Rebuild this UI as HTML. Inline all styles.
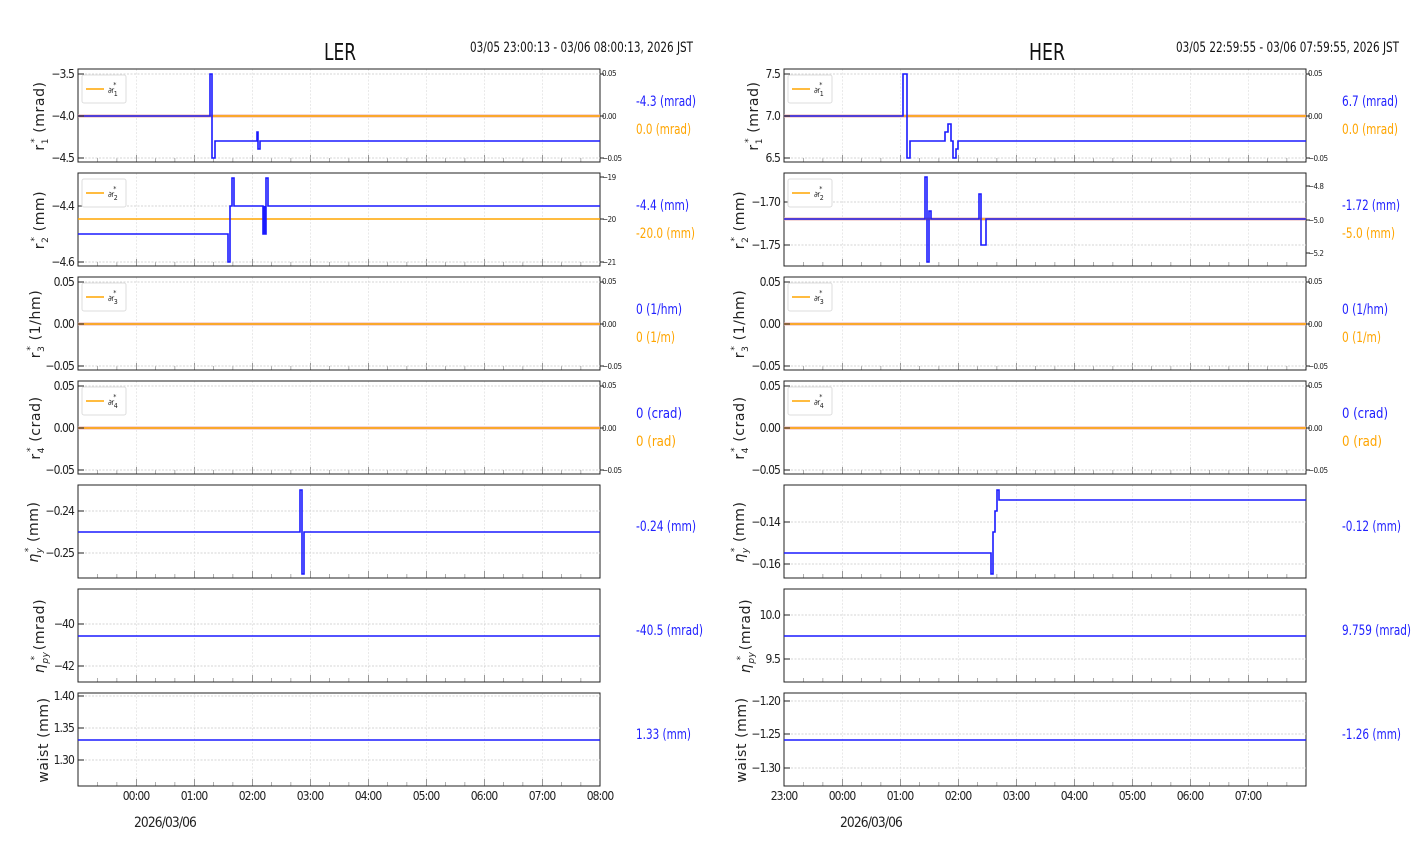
<!DOCTYPE html>
<html><head><meta charset="utf-8"><style>
html,body{margin:0;padding:0;background:#fff;width:1412px;height:864px;overflow:hidden}
svg{display:block}
.t{font-family:"Liberation Sans Narrow","DejaVu Sans Condensed","Liberation Sans",sans-serif;font-size:12px;letter-spacing:-0.9px;fill:#222}
.s{font-family:"Liberation Sans Narrow","DejaVu Sans Condensed",sans-serif;font-size:8px;letter-spacing:-0.5px;fill:#222}
.yl{font-family:"DejaVu Sans","Liberation Sans",sans-serif;font-size:14px;letter-spacing:0.6px;fill:#222}
.an{font-family:"Liberation Sans Narrow","DejaVu Sans Condensed",sans-serif;font-size:14px}
.b{fill:none;stroke:#1a1aff;stroke-width:1.6}
.o{stroke:#ffa500;stroke-width:1.5}
.g{stroke:#c8c8c8;stroke-width:0.8;stroke-dasharray:2,1.5}
</style></head><body>
<svg width="1412" height="864" viewBox="0 0 1412 864" xmlns="http://www.w3.org/2000/svg">
<defs>
<pattern id="vg" patternUnits="userSpaceOnUse" x="0" y="0" width="58" height="93">
<line x1="0" y1="0" x2="0" y2="93" stroke="#c8c8c8" stroke-width="0.8" stroke-dasharray="2,1.5"/>
<line x1="0" y1="86" x2="0" y2="93" stroke="#333" stroke-width="1"/>
</pattern>
<pattern id="mt" patternUnits="userSpaceOnUse" x="0" y="0" width="19.333" height="93">
<line x1="0" y1="89" x2="0" y2="93" stroke="#333" stroke-width="0.8"/>
</pattern>
<g id="frame">
<rect x="0" y="0" width="522" height="93" fill="url(#mt)"/>
<rect x="0" y="0" width="522" height="93" fill="url(#vg)"/>
<rect x="0" y="0" width="522" height="93" fill="none" stroke="#222" stroke-width="1"/>
</g>
</defs>

<text x="340" y="60" text-anchor="middle" font-family="Liberation Sans Narrow,DejaVu Sans Condensed,sans-serif" font-size="23" textLength="32" lengthAdjust="spacingAndGlyphs" fill="#111">LER</text>
<text x="470" y="52" font-family="Liberation Sans Narrow,DejaVu Sans Condensed,sans-serif" font-size="14" textLength="223" lengthAdjust="spacingAndGlyphs" fill="#111">03/05 23:00:13 - 03/06 08:00:13, 2026 JST</text>
<text x="1047" y="60" text-anchor="middle" font-family="Liberation Sans Narrow,DejaVu Sans Condensed,sans-serif" font-size="23" textLength="36" lengthAdjust="spacingAndGlyphs" fill="#111">HER</text>
<text x="1176" y="52" font-family="Liberation Sans Narrow,DejaVu Sans Condensed,sans-serif" font-size="14" textLength="223" lengthAdjust="spacingAndGlyphs" fill="#111">03/05 22:59:55 - 03/06 07:59:55, 2026 JST</text>

<!-- ============ LEFT ============ -->
<g transform="translate(78,69)">
<use href="#frame"/>
<line class="g" x1="0" x2="522" y1="5" y2="5"/><line class="g" x1="0" x2="522" y1="47" y2="47"/><line class="g" x1="0" x2="522" y1="89" y2="89"/>
<line x1="0" x2="522" y1="47" y2="47" stroke="#e8b0b0" stroke-width="3"/>
<line class="o" x1="0" x2="522" y1="47" y2="47"/>
<path class="b" d="M0,47 H132 V5 H134 V89 H137 V72 H179 V63 H180 V80 H182 V72 H522"/>
<g stroke="#222"><line x1="0" x2="6" y1="5" y2="5"/><line x1="0" x2="6" y1="47" y2="47"/><line x1="0" x2="6" y1="89" y2="89"/><line x1="522" x2="526" y1="5" y2="5"/><line x1="522" x2="526" y1="47" y2="47"/><line x1="522" x2="526" y1="89" y2="89"/></g>
<text class="t" x="-4" y="9" text-anchor="end">−3.5</text><text class="t" x="-4" y="51" text-anchor="end">−4.0</text><text class="t" x="-4" y="93" text-anchor="end">−4.5</text>
<text class="s" x="524" y="7">0.05</text><text class="s" x="524" y="50">0.00</text><text class="s" x="524" y="92">−0.05</text>
<rect x="4" y="6" width="44" height="28" rx="2" fill="#fff" stroke="#ddd"/><line class="o" x1="8" x2="26" y1="20" y2="20"/>
<text class="s" x="30" y="24" font-size="10">∂r<tspan font-size="7" dy="3">1</tspan><tspan font-size="7" dx="-4" dy="-9">*</tspan></text>
</g>
<g transform="translate(78,173)">
<use href="#frame"/>
<line class="g" x1="0" x2="522" y1="33" y2="33"/><line class="g" x1="0" x2="522" y1="89" y2="89"/>
<line class="o" x1="0" x2="522" y1="46" y2="46"/>
<path class="b" d="M0,61 H150 V89 H152 V33 H154 V5 H156 V33 H185 V61 H188 V5 H190 V33 H522"/>
<rect x="185" y="33" width="3" height="28" fill="#1a1aff"/>
<g stroke="#222"><line x1="0" x2="6" y1="33" y2="33"/><line x1="0" x2="6" y1="89" y2="89"/><line x1="522" x2="526" y1="4" y2="4"/><line x1="522" x2="526" y1="46" y2="46"/><line x1="522" x2="526" y1="89" y2="89"/></g>
<text class="t" x="-4" y="37" text-anchor="end">−4.4</text><text class="t" x="-4" y="93" text-anchor="end">−4.6</text>
<text class="s" x="524" y="7">−19</text><text class="s" x="524" y="49">−20</text><text class="s" x="524" y="92">−21</text>
<rect x="4" y="6" width="44" height="28" rx="2" fill="#fff" stroke="#ddd"/><line class="o" x1="8" x2="26" y1="20" y2="20"/>
<text class="s" x="30" y="24" font-size="10">∂r<tspan font-size="7" dy="3">2</tspan><tspan font-size="7" dx="-4" dy="-9">*</tspan></text>
</g>
<g transform="translate(78,277)">
<use href="#frame"/>
<line class="g" x1="0" x2="522" y1="5" y2="5"/><line class="g" x1="0" x2="522" y1="89" y2="89"/>
<line x1="0" x2="522" y1="47" y2="47" stroke="#e8b0b0" stroke-width="3"/><line class="o" x1="0" x2="522" y1="47" y2="47"/>
<g stroke="#222"><line x1="0" x2="6" y1="5" y2="5"/><line x1="0" x2="6" y1="47" y2="47"/><line x1="0" x2="6" y1="89" y2="89"/><line x1="522" x2="526" y1="5" y2="5"/><line x1="522" x2="526" y1="47" y2="47"/><line x1="522" x2="526" y1="89" y2="89"/></g>
<text class="t" x="-4" y="9" text-anchor="end">0.05</text><text class="t" x="-4" y="51" text-anchor="end">0.00</text><text class="t" x="-4" y="93" text-anchor="end">−0.05</text>
<text class="s" x="524" y="7">0.05</text><text class="s" x="524" y="50">0.00</text><text class="s" x="524" y="92">−0.05</text>
<rect x="4" y="6" width="44" height="28" rx="2" fill="#fff" stroke="#ddd"/><line class="o" x1="8" x2="26" y1="20" y2="20"/>
<text class="s" x="30" y="24" font-size="10">∂r<tspan font-size="7" dy="3">3</tspan><tspan font-size="7" dx="-4" dy="-9">*</tspan></text>
</g>
<g transform="translate(78,381)">
<use href="#frame"/>
<line class="g" x1="0" x2="522" y1="5" y2="5"/><line class="g" x1="0" x2="522" y1="89" y2="89"/>
<line x1="0" x2="522" y1="47" y2="47" stroke="#e8b0b0" stroke-width="3"/><line class="o" x1="0" x2="522" y1="47" y2="47"/>
<g stroke="#222"><line x1="0" x2="6" y1="5" y2="5"/><line x1="0" x2="6" y1="47" y2="47"/><line x1="0" x2="6" y1="89" y2="89"/><line x1="522" x2="526" y1="5" y2="5"/><line x1="522" x2="526" y1="47" y2="47"/><line x1="522" x2="526" y1="89" y2="89"/></g>
<text class="t" x="-4" y="9" text-anchor="end">0.05</text><text class="t" x="-4" y="51" text-anchor="end">0.00</text><text class="t" x="-4" y="93" text-anchor="end">−0.05</text>
<text class="s" x="524" y="7">0.05</text><text class="s" x="524" y="50">0.00</text><text class="s" x="524" y="92">−0.05</text>
<rect x="4" y="6" width="44" height="28" rx="2" fill="#fff" stroke="#ddd"/><line class="o" x1="8" x2="26" y1="20" y2="20"/>
<text class="s" x="30" y="24" font-size="10">∂r<tspan font-size="7" dy="3">4</tspan><tspan font-size="7" dx="-4" dy="-9">*</tspan></text>
</g>
<g transform="translate(78,485)">
<use href="#frame"/>
<line class="g" x1="0" x2="522" y1="26" y2="26"/><line class="g" x1="0" x2="522" y1="68" y2="68"/>
<path class="b" d="M0,47 H222 V5 H224 V89 H226 V47 H522"/>
<g stroke="#222"><line x1="0" x2="6" y1="26" y2="26"/><line x1="0" x2="6" y1="68" y2="68"/></g>
<text class="t" x="-4" y="30" text-anchor="end">−0.24</text><text class="t" x="-4" y="72" text-anchor="end">−0.25</text>
</g>
<g transform="translate(78,589)">
<use href="#frame"/>
<line class="g" x1="0" x2="522" y1="35" y2="35"/><line class="g" x1="0" x2="522" y1="77" y2="77"/>
<path class="b" d="M0,47 H522"/>
<g stroke="#222"><line x1="0" x2="6" y1="35" y2="35"/><line x1="0" x2="6" y1="77" y2="77"/></g>
<text class="t" x="-4" y="39" text-anchor="end">−40</text><text class="t" x="-4" y="81" text-anchor="end">−42</text>
</g>
<g transform="translate(78,693)">
<use href="#frame"/>
<line class="g" x1="0" x2="522" y1="3" y2="3"/><line class="g" x1="0" x2="522" y1="35" y2="35"/><line class="g" x1="0" x2="522" y1="67" y2="67"/>
<path class="b" d="M0,47 H522"/>
<g stroke="#222"><line x1="0" x2="6" y1="3" y2="3"/><line x1="0" x2="6" y1="35" y2="35"/><line x1="0" x2="6" y1="67" y2="67"/></g>
<text class="t" x="-4" y="7" text-anchor="end">1.40</text><text class="t" x="-4" y="39" text-anchor="end">1.35</text><text class="t" x="-4" y="71" text-anchor="end">1.30</text>
</g>
<g class="t" text-anchor="middle">
<text x="136" y="800">00:00</text><text x="194" y="800">01:00</text><text x="252" y="800">02:00</text><text x="310" y="800">03:00</text><text x="368" y="800">04:00</text><text x="426" y="800">05:00</text><text x="484" y="800">06:00</text><text x="542" y="800">07:00</text><text x="600" y="800">08:00</text>
<text x="165" y="827" font-size="14" textLength="62" lengthAdjust="spacingAndGlyphs">2026/03/06</text>
</g>
<g class="yl" text-anchor="middle">
<text transform="translate(44,116) rotate(-90)">r<tspan font-size="9" dy="4">1</tspan><tspan font-size="9" dx="-5" dy="-11">*</tspan><tspan dy="7"> (mrad)</tspan></text>
<text transform="translate(44,220) rotate(-90)">r<tspan font-size="9" dy="4">2</tspan><tspan font-size="9" dx="-5" dy="-11">*</tspan><tspan dy="7"> (mm)</tspan></text>
<text transform="translate(40,324) rotate(-90)">r<tspan font-size="9" dy="4">3</tspan><tspan font-size="9" dx="-5" dy="-11">*</tspan><tspan dy="7"> (1/hm)</tspan></text>
<text transform="translate(40,428) rotate(-90)">r<tspan font-size="9" dy="4">4</tspan><tspan font-size="9" dx="-5" dy="-11">*</tspan><tspan dy="7"> (crad)</tspan></text>
<text transform="translate(38,532) rotate(-90)"><tspan font-style="italic">η</tspan><tspan font-size="9" dy="4" font-style="italic">y</tspan><tspan font-size="9" dx="-5" dy="-11">*</tspan><tspan dy="7"> (mm)</tspan></text>
<text transform="translate(44,636) rotate(-90)"><tspan font-style="italic">η</tspan><tspan font-size="9" dy="4" font-style="italic">py</tspan><tspan font-size="9" dx="-9" dy="-11">*</tspan><tspan dy="7"> (mrad)</tspan></text>
<text transform="translate(48,740) rotate(-90)">waist (mm)</text>
</g>
<g class="an" lengthAdjust="spacingAndGlyphs">
<text x="636" y="106" fill="#2020ff" textLength="60" lengthAdjust="spacingAndGlyphs">-4.3 (mrad)</text><text x="636" y="134" fill="#ffa500" textLength="55" lengthAdjust="spacingAndGlyphs">0.0 (mrad)</text>
<text x="636" y="210" fill="#2020ff" textLength="53" lengthAdjust="spacingAndGlyphs">-4.4 (mm)</text><text x="636" y="238" fill="#ffa500" textLength="59" lengthAdjust="spacingAndGlyphs">-20.0 (mm)</text>
<text x="636" y="314" fill="#2020ff" textLength="46" lengthAdjust="spacingAndGlyphs">0 (1/hm)</text><text x="636" y="342" fill="#ffa500" textLength="39" lengthAdjust="spacingAndGlyphs">0 (1/m)</text>
<text x="636" y="418" fill="#2020ff" textLength="46" lengthAdjust="spacingAndGlyphs">0 (crad)</text><text x="636" y="446" fill="#ffa500" textLength="40" lengthAdjust="spacingAndGlyphs">0 (rad)</text>
<text x="636" y="531" fill="#2020ff" textLength="60" lengthAdjust="spacingAndGlyphs">-0.24 (mm)</text>
<text x="636" y="635" fill="#2020ff" textLength="67" lengthAdjust="spacingAndGlyphs">-40.5 (mrad)</text>
<text x="636" y="739" fill="#2020ff" textLength="55" lengthAdjust="spacingAndGlyphs">1.33 (mm)</text>
</g>

<!-- ============ RIGHT ============ -->
<g transform="translate(784,69)">
<use href="#frame"/>
<line class="g" x1="0" x2="522" y1="5" y2="5"/><line class="g" x1="0" x2="522" y1="47" y2="47"/><line class="g" x1="0" x2="522" y1="89" y2="89"/>
<line x1="0" x2="522" y1="47" y2="47" stroke="#e8b0b0" stroke-width="3"/><line class="o" x1="0" x2="522" y1="47" y2="47"/>
<path class="b" d="M0,47 H119 V5 H123 V89 H126 V72 H161 V63 H164 V55 H167 V72 H169 V89 H172 V80 H174 V72 H522"/>
<g stroke="#222"><line x1="0" x2="6" y1="5" y2="5"/><line x1="0" x2="6" y1="47" y2="47"/><line x1="0" x2="6" y1="89" y2="89"/><line x1="522" x2="526" y1="5" y2="5"/><line x1="522" x2="526" y1="47" y2="47"/><line x1="522" x2="526" y1="89" y2="89"/></g>
<text class="t" x="-4" y="9" text-anchor="end">7.5</text><text class="t" x="-4" y="51" text-anchor="end">7.0</text><text class="t" x="-4" y="93" text-anchor="end">6.5</text>
<text class="s" x="524" y="7">0.05</text><text class="s" x="524" y="50">0.00</text><text class="s" x="524" y="92">−0.05</text>
<rect x="4" y="6" width="44" height="28" rx="2" fill="#fff" stroke="#ddd"/><line class="o" x1="8" x2="26" y1="20" y2="20"/>
<text class="s" x="30" y="24" font-size="10">∂r<tspan font-size="7" dy="3">1</tspan><tspan font-size="7" dx="-4" dy="-9">*</tspan></text>
</g>
<g transform="translate(784,173)">
<use href="#frame"/>
<line class="g" x1="0" x2="522" y1="29" y2="29"/><line class="g" x1="0" x2="522" y1="72" y2="72"/>
<line x1="0" x2="522" y1="46" y2="46" stroke="#e8b0b0" stroke-width="3"/><line class="o" x1="0" x2="522" y1="46" y2="46"/>
<path class="b" d="M0,46 H141 V4 H143 V89 H145 V38 H147 V46 H195 V21 H197 V72 H202 V46 H522"/>
<g stroke="#222"><line x1="0" x2="6" y1="29" y2="29"/><line x1="0" x2="6" y1="72" y2="72"/><line x1="522" x2="526" y1="13" y2="13"/><line x1="522" x2="526" y1="47" y2="47"/><line x1="522" x2="526" y1="80" y2="80"/></g>
<text class="t" x="-4" y="33" text-anchor="end">−1.70</text><text class="t" x="-4" y="76" text-anchor="end">−1.75</text>
<text class="s" x="524" y="16">−4.8</text><text class="s" x="524" y="50">−5.0</text><text class="s" x="524" y="83">−5.2</text>
<rect x="4" y="6" width="44" height="28" rx="2" fill="#fff" stroke="#ddd"/><line class="o" x1="8" x2="26" y1="20" y2="20"/>
<text class="s" x="30" y="24" font-size="10">∂r<tspan font-size="7" dy="3">2</tspan><tspan font-size="7" dx="-4" dy="-9">*</tspan></text>
</g>
<g transform="translate(784,277)">
<use href="#frame"/>
<line class="g" x1="0" x2="522" y1="5" y2="5"/><line class="g" x1="0" x2="522" y1="89" y2="89"/>
<line x1="0" x2="522" y1="47" y2="47" stroke="#e8b0b0" stroke-width="3"/><line class="o" x1="0" x2="522" y1="47" y2="47"/>
<g stroke="#222"><line x1="0" x2="6" y1="5" y2="5"/><line x1="0" x2="6" y1="47" y2="47"/><line x1="0" x2="6" y1="89" y2="89"/><line x1="522" x2="526" y1="5" y2="5"/><line x1="522" x2="526" y1="47" y2="47"/><line x1="522" x2="526" y1="89" y2="89"/></g>
<text class="t" x="-4" y="9" text-anchor="end">0.05</text><text class="t" x="-4" y="51" text-anchor="end">0.00</text><text class="t" x="-4" y="93" text-anchor="end">−0.05</text>
<text class="s" x="524" y="7">0.05</text><text class="s" x="524" y="50">0.00</text><text class="s" x="524" y="92">−0.05</text>
<rect x="4" y="6" width="44" height="28" rx="2" fill="#fff" stroke="#ddd"/><line class="o" x1="8" x2="26" y1="20" y2="20"/>
<text class="s" x="30" y="24" font-size="10">∂r<tspan font-size="7" dy="3">3</tspan><tspan font-size="7" dx="-4" dy="-9">*</tspan></text>
</g>
<g transform="translate(784,381)">
<use href="#frame"/>
<line class="g" x1="0" x2="522" y1="5" y2="5"/><line class="g" x1="0" x2="522" y1="89" y2="89"/>
<line x1="0" x2="522" y1="47" y2="47" stroke="#e8b0b0" stroke-width="3"/><line class="o" x1="0" x2="522" y1="47" y2="47"/>
<g stroke="#222"><line x1="0" x2="6" y1="5" y2="5"/><line x1="0" x2="6" y1="47" y2="47"/><line x1="0" x2="6" y1="89" y2="89"/><line x1="522" x2="526" y1="5" y2="5"/><line x1="522" x2="526" y1="47" y2="47"/><line x1="522" x2="526" y1="89" y2="89"/></g>
<text class="t" x="-4" y="9" text-anchor="end">0.05</text><text class="t" x="-4" y="51" text-anchor="end">0.00</text><text class="t" x="-4" y="93" text-anchor="end">−0.05</text>
<text class="s" x="524" y="7">0.05</text><text class="s" x="524" y="50">0.00</text><text class="s" x="524" y="92">−0.05</text>
<rect x="4" y="6" width="44" height="28" rx="2" fill="#fff" stroke="#ddd"/><line class="o" x1="8" x2="26" y1="20" y2="20"/>
<text class="s" x="30" y="24" font-size="10">∂r<tspan font-size="7" dy="3">4</tspan><tspan font-size="7" dx="-4" dy="-9">*</tspan></text>
</g>
<g transform="translate(784,485)">
<use href="#frame"/>
<line class="g" x1="0" x2="522" y1="37" y2="37"/><line class="g" x1="0" x2="522" y1="79" y2="79"/>
<path class="b" d="M0,68 H207 V89 H209 V47 H211 V26 H213 V5 H215 V15 H522"/>
<g stroke="#222"><line x1="0" x2="6" y1="37" y2="37"/><line x1="0" x2="6" y1="79" y2="79"/></g>
<text class="t" x="-4" y="41" text-anchor="end">−0.14</text><text class="t" x="-4" y="83" text-anchor="end">−0.16</text>
</g>
<g transform="translate(784,589)">
<use href="#frame"/>
<line class="g" x1="0" x2="522" y1="26" y2="26"/><line class="g" x1="0" x2="522" y1="70" y2="70"/>
<path class="b" d="M0,47 H522"/>
<g stroke="#222"><line x1="0" x2="6" y1="26" y2="26"/><line x1="0" x2="6" y1="70" y2="70"/></g>
<text class="t" x="-4" y="30" text-anchor="end">10.0</text><text class="t" x="-4" y="74" text-anchor="end">9.5</text>
</g>
<g transform="translate(784,693)">
<use href="#frame"/>
<line class="g" x1="0" x2="522" y1="8" y2="8"/><line class="g" x1="0" x2="522" y1="41" y2="41"/><line class="g" x1="0" x2="522" y1="75" y2="75"/>
<path class="b" d="M0,47 H522"/>
<g stroke="#222"><line x1="0" x2="6" y1="8" y2="8"/><line x1="0" x2="6" y1="41" y2="41"/><line x1="0" x2="6" y1="75" y2="75"/></g>
<text class="t" x="-4" y="12" text-anchor="end">−1.20</text><text class="t" x="-4" y="45" text-anchor="end">−1.25</text><text class="t" x="-4" y="79" text-anchor="end">−1.30</text>
</g>
<g class="t" text-anchor="middle">
<text x="784" y="800">23:00</text><text x="842" y="800">00:00</text><text x="900" y="800">01:00</text><text x="958" y="800">02:00</text><text x="1016" y="800">03:00</text><text x="1074" y="800">04:00</text><text x="1132" y="800">05:00</text><text x="1190" y="800">06:00</text><text x="1248" y="800">07:00</text>
<text x="871" y="827" font-size="14" textLength="62" lengthAdjust="spacingAndGlyphs">2026/03/06</text>
</g>
<g class="yl" text-anchor="middle">
<text transform="translate(758,116) rotate(-90)">r<tspan font-size="9" dy="4">1</tspan><tspan font-size="9" dx="-5" dy="-11">*</tspan><tspan dy="7"> (mrad)</tspan></text>
<text transform="translate(744,220) rotate(-90)">r<tspan font-size="9" dy="4">2</tspan><tspan font-size="9" dx="-5" dy="-11">*</tspan><tspan dy="7"> (mm)</tspan></text>
<text transform="translate(744,324) rotate(-90)">r<tspan font-size="9" dy="4">3</tspan><tspan font-size="9" dx="-5" dy="-11">*</tspan><tspan dy="7"> (1/hm)</tspan></text>
<text transform="translate(744,428) rotate(-90)">r<tspan font-size="9" dy="4">4</tspan><tspan font-size="9" dx="-5" dy="-11">*</tspan><tspan dy="7"> (crad)</tspan></text>
<text transform="translate(744,532) rotate(-90)"><tspan font-style="italic">η</tspan><tspan font-size="9" dy="4" font-style="italic">y</tspan><tspan font-size="9" dx="-5" dy="-11">*</tspan><tspan dy="7"> (mm)</tspan></text>
<text transform="translate(750,636) rotate(-90)"><tspan font-style="italic">η</tspan><tspan font-size="9" dy="4" font-style="italic">py</tspan><tspan font-size="9" dx="-9" dy="-11">*</tspan><tspan dy="7"> (mrad)</tspan></text>
<text transform="translate(746,740) rotate(-90)">waist (mm)</text>
</g>
<g class="an">
<text x="1342" y="106" fill="#2020ff" textLength="56" lengthAdjust="spacingAndGlyphs">6.7 (mrad)</text><text x="1342" y="134" fill="#ffa500" textLength="56" lengthAdjust="spacingAndGlyphs">0.0 (mrad)</text>
<text x="1342" y="210" fill="#2020ff" textLength="58" lengthAdjust="spacingAndGlyphs">-1.72 (mm)</text><text x="1342" y="238" fill="#ffa500" textLength="53" lengthAdjust="spacingAndGlyphs">-5.0 (mm)</text>
<text x="1342" y="314" fill="#2020ff" textLength="46" lengthAdjust="spacingAndGlyphs">0 (1/hm)</text><text x="1342" y="342" fill="#ffa500" textLength="39" lengthAdjust="spacingAndGlyphs">0 (1/m)</text>
<text x="1342" y="418" fill="#2020ff" textLength="46" lengthAdjust="spacingAndGlyphs">0 (crad)</text><text x="1342" y="446" fill="#ffa500" textLength="40" lengthAdjust="spacingAndGlyphs">0 (rad)</text>
<text x="1342" y="531" fill="#2020ff" textLength="59" lengthAdjust="spacingAndGlyphs">-0.12 (mm)</text>
<text x="1342" y="635" fill="#2020ff" textLength="69" lengthAdjust="spacingAndGlyphs">9.759 (mrad)</text>
<text x="1342" y="739" fill="#2020ff" textLength="59" lengthAdjust="spacingAndGlyphs">-1.26 (mm)</text>
</g>
</svg>
</body></html>
